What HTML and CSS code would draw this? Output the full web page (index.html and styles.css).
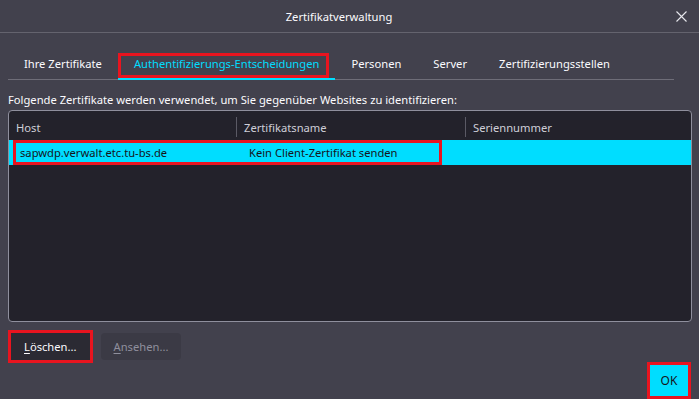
FILE: index.html
```html
<!DOCTYPE html>
<html lang="de">
<head>
    <meta charset="UTF-8">
    <meta name="viewport" content="width=device-width, initial-scale=1.0">
    <title>Zertifikatverwaltung</title>
    <link rel="stylesheet" href="styles.css">
</head>
<body>
    <div class="titlebar">
        <div class="title">Zertifikatverwaltung</div>
        <div class="close">
            <svg width="11" height="11" viewBox="0 0 11 11"><path d="M0.5 0.5 L10.5 10.5 M10.5 0.5 L0.5 10.5" stroke="#e8e8ee" stroke-width="1.1" fill="none"/></svg>
        </div>
    </div>

    <div class="dialog">
        <div class="tabs">
            <div class="tab">Ihre Zertifikate</div>
            <div class="tab active">Authentifizierungs-Entscheidungen</div>
            <div class="tab">Personen</div>
            <div class="tab">Server</div>
            <div class="tab">Zertifizierungsstellen</div>
        </div>

        <div class="intro">Folgende Zertifikate werden verwendet, um Sie gegenüber Websites zu identifizieren:</div>

        <div class="tree">
            <div class="tree-head">
                <div class="col">Host</div>
                <div class="col">Zertifikatsname</div>
                <div class="col">Seriennummer</div>
            </div>
            <div class="tree-row selected">
                <div class="cell">sapwdp.verwalt.etc.tu-bs.de</div>
                <div class="cell">Kein Client-Zertifikat senden</div>
                <div class="cell"></div>
            </div>
        </div>

        <div class="actions">
            <button class="btn marked"><u>L</u>öschen...</button>
            <button class="btn" disabled><u>A</u>nsehen...</button>
        </div>

        <div class="footer">
            <button class="btn primary marked">OK</button>
        </div>
    </div>
</body>
</html>
```

FILE: styles.css
```css
body {
    margin: 0;
    width: 699px;
    height: 399px;
    overflow: hidden;
    background: #42414d;
    color: #fbfbfe;
    font-family: 'Noto Sans', 'Open Sans', sans-serif;
    font-size: 11.2px;
}

.titlebar {
    display: flex;
    align-items: center;
    height: 32px;
    border-bottom: 1px solid #64636e;
}

.title {
    flex: 1;
    text-align: center;
    padding-left: 2px;
}

.close {
    width: 23px;
    display: flex;
    padding-top: 1px;
}

.dialog {
    padding: 0 7px 0 8px;
}

/* tab strip */
.tabs {
    display: flex;
    margin-top: 19px;
    margin-right: 18px;
    border-bottom: 1px solid #6e6d78;
}

.tab {
    position: relative;
    padding: 0 16px;
    height: 26px;
    line-height: 24px;
    border-bottom: 2px solid transparent;
    margin-bottom: -1px;
    white-space: nowrap;
}

.tab.active {
    color: #00ddff;
    border-bottom-color: #00ddff;
}

.tab.active::after {
    content: "";
    position: absolute;
    left: 0;
    right: 6px;
    top: 1px;
    bottom: 0;
    border: 3px solid #e8141f;
}

.intro {
    margin-top: 12px;
    line-height: 16px;
}

/* tree */
.tree {
    margin-top: 2px;
    height: 210px;
    border: 1px solid #8f8f9d;
    border-radius: 4px;
    background: #23222b;
    overflow: hidden;
}

.tree-head,
.tree-row {
    display: grid;
    grid-template-columns: 227px 229px 1fr;
}

.tree-head {
    height: 29px;
    color: #cfcfd8;
}

.tree-head .col {
    display: flex;
    align-items: center;
    padding-left: 7px;
    border-left: 1px solid #5b5a65;
    margin: 6px 0 3px;
}

.tree-head .col:first-child {
    border-left: none;
}

.tree-row {
    position: relative;
    height: 25px;
    align-items: center;
}

.tree-row.selected {
    background: #00ddff;
    color: #15141a;
}

.tree-row.selected::after {
    content: "";
    position: absolute;
    left: 4px;
    top: 0;
    width: 423px;
    height: 19px;
    border: 3px solid #e8141f;
}

.cell {
    padding-left: 11px;
    white-space: nowrap;
}

.cell + .cell {
    padding-left: 13px;
}

/* buttons */
.actions {
    display: flex;
    gap: 11px;
    margin-top: 11px;
    padding-left: 3px;
}

.btn {
    font-family: inherit;
    font-size: 11.2px;
    height: 27px;
    padding: 0 13px;
    border: none;
    border-radius: 4px;
    background: #2b2a33;
    color: #fbfbfe;
}

.btn u {
    text-underline-offset: 2px;
}

.btn:disabled {
    background: #3b3a45;
    color: #8f8f9d;
}

.btn.marked {
    border-radius: 0;
    outline: 3px solid #e8141f;
}

.footer {
    display: flex;
    justify-content: flex-end;
    margin-top: 5px;
    padding-right: 4px;
}

.btn.primary {
    background: #00ddff;
    color: #15141a;
    height: 31px;
    width: 38px;
    padding: 0;
    font-size: 12px;
}
```
